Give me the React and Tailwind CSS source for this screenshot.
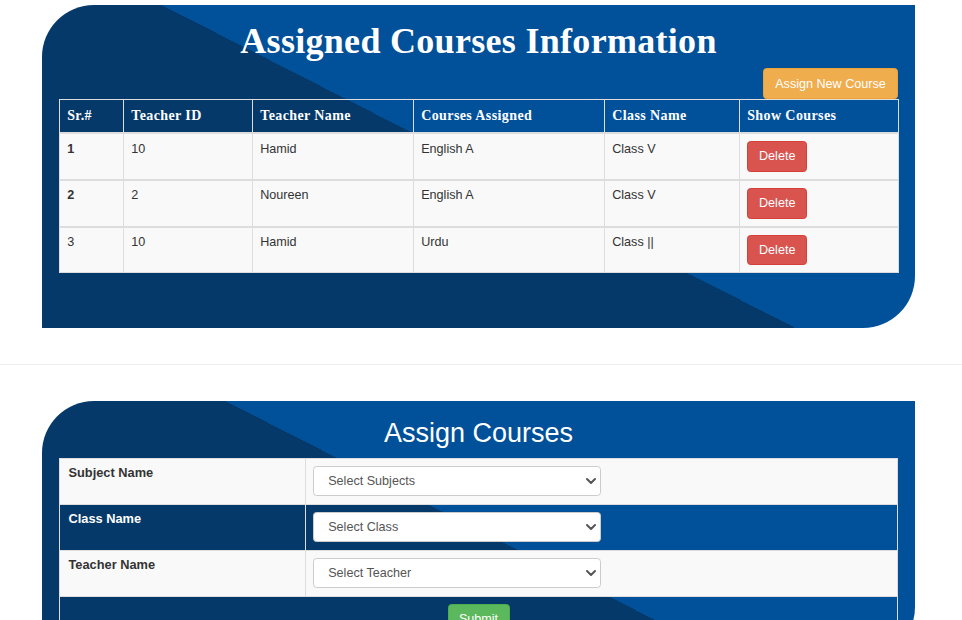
import { ChevronDown } from "lucide-react";

const HEADERS = [
  ["Sr.#", "w-[64px]"],
  ["Teacher ID", "w-[129px]"],
  ["Teacher Name", "w-[161px]"],
  ["Courses Assigned", "w-[191px]"],
  ["Class Name", "w-[135px]"],
  ["Show Courses", "w-[159px]"],
];

const ROWS = [
  { sr: "1", id: "10", name: "Hamid", course: "English A", cls: "Class V", bold: true },
  { sr: "2", id: "2", name: "Noureen", course: "English A", cls: "Class V", bold: true },
  { sr: "3", id: "10", name: "Hamid", course: "Urdu", cls: "Class ||", bold: false },
];

const FIELDS = [
  { label: "Subject Name", placeholder: "Select Subjects" },
  { label: "Class Name", placeholder: "Select Class" },
  { label: "Teacher Name", placeholder: "Select Teacher" },
];

const cardBg = "bg-[linear-gradient(27deg,#04396a_50%,#00509a_50%)]";
const cell = "border border-[#ddd] px-[7.2px] align-top text-[12.6px] leading-[18px] text-[#333]";

function CoursesTable() {
  return (
    <div className={`ml-[42px] h-[323px] w-[873px] rounded-tl-[52px] rounded-br-[52px] px-[17px] pt-[16px] ${cardBg}`}>
      <h1 className="text-center font-['Liberation_Serif',serif] text-[36px] font-bold leading-[40px] tracking-[0.3px] text-white">
        Assigned Courses Information
      </h1>

      <div className="mt-[7px] flex justify-end">
        <button className="h-[31px] w-[135px] rounded-[3.6px] border border-[#eea236] bg-[#f0ad4e] text-[12.6px] leading-[18px] text-white">
          Assign New Course
        </button>
      </div>

      <table className="w-[839px] table-fixed border-collapse">
        <thead>
          <tr className="border-b-2 border-[#ddd]">
            {HEADERS.map(([label, width]) => (
              <th
                key={label}
                className={`${width} border border-[#ddd] pl-[7.2px] pt-[7px] pb-[7px] text-left align-top font-['Liberation_Serif',serif] text-[14px] font-bold leading-[18px] tracking-[0.4px] text-white`}
              >
                {label}
              </th>
            ))}
          </tr>
        </thead>
        <tbody>
          {ROWS.map((r) => (
            <tr key={r.sr} className="border-t-2 border-[#ddd] bg-[#f9f9f9]">
              <td className={`${cell} pt-[5.5px] ${r.bold ? "font-bold" : ""}`}>{r.sr}</td>
              <td className={`${cell} pt-[5.5px]`}>{r.id}</td>
              <td className={`${cell} pt-[5.5px]`}>{r.name}</td>
              <td className={`${cell} pt-[5.5px]`}>{r.course}</td>
              <td className={`${cell} pt-[5.5px]`}>{r.cls}</td>
              <td className={`${cell} py-[7px]`}>
                <button className="h-[30.8px] w-[60px] rounded-[3.6px] border border-[#d43f3a] bg-[#d9534f] text-[12.6px] leading-[18px] text-white">
                  Delete
                </button>
              </td>
            </tr>
          ))}
        </tbody>
      </table>
    </div>
  );
}

function AssignForm() {
  return (
    <div className={`ml-[42px] h-[258px] w-[873px] rounded-tl-[52px] rounded-br-[52px] px-[17px] pt-[18px] ${cardBg}`}>
      <h2 className="mb-[9px] text-center text-[27px] leading-[29.7px] text-white">Assign Courses</h2>

      <table className="w-[839px] table-fixed border-collapse">
        <tbody>
          {FIELDS.map((f, i) => (
            <tr key={f.label} className={i % 2 === 0 ? "bg-[#f9f9f9]" : ""}>
              <th
                className={`w-[246px] border border-[#ddd] pl-[8.5px] pr-[7.2px] pt-[5.5px] text-left align-top text-[12.8px] font-bold leading-[18px] ${
                  i % 2 === 0 ? "text-[#333]" : "text-white"
                }`}
              >
                {f.label}
              </th>
              <td className="border border-[#ddd] p-[7.2px]">
                <div className="relative w-[288px]">
                  <select
                    defaultValue=""
                    className="h-[30.6px] w-full appearance-none rounded-[3.6px] border border-[#ccc] bg-white pl-[14px] text-[12.6px] text-[#555] outline-none"
                  >
                    <option value="">{f.placeholder}</option>
                  </select>
                  <ChevronDown
                    size={16}
                    strokeWidth={3}
                    className="pointer-events-none absolute right-[2px] top-[7px] text-[#555]"
                  />
                </div>
              </td>
            </tr>
          ))}
          <tr>
            <td colSpan={2} className="border border-[#ddd] p-[7.2px] text-center">
              <button className="h-[30.8px] w-[62px] rounded-[3.6px] border border-[#4cae4c] bg-[#5cb85c] text-[12.6px] leading-[18px] text-white">
                Submit
              </button>
            </td>
          </tr>
        </tbody>
      </table>
    </div>
  );
}

export default function App() {
  return (
    <div className="h-[620px] overflow-hidden bg-white pt-[5px] font-['Liberation_Sans',Arial,sans-serif]">
      <CoursesTable />
      <div className="my-[36px] h-px bg-[#eee]" />
      <AssignForm />
    </div>
  );
}
